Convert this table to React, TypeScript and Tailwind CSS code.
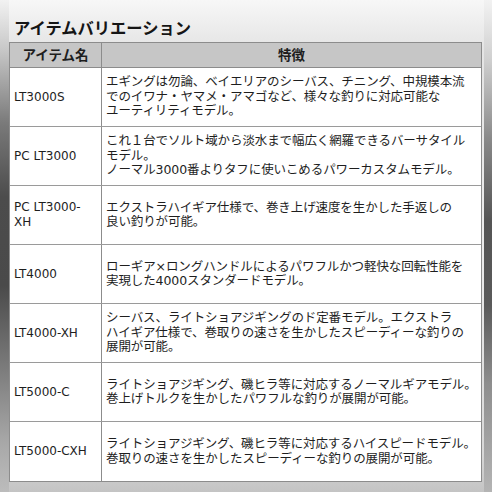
import { Fragment } from "react";

const FONT = { fontFamily: '"DejaVu Sans", "Noto Sans CJK JP", sans-serif' };

type Row = { name: string[]; desc: string[] };

const rows: Row[] = [
  {
    name: ["LT3000S"],
    desc: [
      "エギングは勿論、ベイエリアのシーバス、チニング、中規模本流",
      "でのイワナ・ヤマメ・アマゴなど、様々な釣りに対応可能な",
      "ユーティリティモデル。",
    ],
  },
  {
    name: ["PC LT3000"],
    desc: [
      "これ１台でソルト域から淡水まで幅広く網羅できるバーサタイル",
      "モデル。",
      "ノーマル3000番よりタフに使いこめるパワーカスタムモデル。",
    ],
  },
  {
    name: ["PC LT3000-", "XH"],
    desc: [
      "エクストラハイギア仕様で、巻き上げ速度を生かした手返しの",
      "良い釣りが可能。",
    ],
  },
  {
    name: ["LT4000"],
    desc: [
      "ローギア×ロングハンドルによるパワフルかつ軽快な回転性能を",
      "実現した4000スタンダードモデル。",
    ],
  },
  {
    name: ["LT4000-XH"],
    desc: [
      "シーバス、ライトショアジギングのド定番モデル。エクストラ",
      "ハイギア仕様で、巻取りの速さを生かしたスピーディーな釣りの",
      "展開が可能。",
    ],
  },
  {
    name: ["LT5000-C"],
    desc: [
      "ライトショアジギング、磯ヒラ等に対応するノーマルギアモデル。",
      "巻上げトルクを生かしたパワフルな釣りが展開が可能。",
    ],
  },
  {
    name: ["LT5000-CXH"],
    desc: [
      "ライトショアジギング、磯ヒラ等に対応するハイスピードモデル。",
      "巻取りの速さを生かしたスピーディーな釣りの展開が可能。",
    ],
  },
];

function Lines({ lines }: { lines: string[] }) {
  return (
    <p className="whitespace-nowrap">
      {lines.map((l, i) => (
        <Fragment key={i}>
          {i > 0 && <br />}
          {l}
        </Fragment>
      ))}
    </p>
  );
}

export default function App() {
  return (
    <div
      className="flex h-[492px] w-[492px] overflow-hidden bg-[linear-gradient(to_bottom,#f7f7f7_0%,#e4e4e4_10%,#ececec_50%,#d8d8d8_92%,#c4c4c4_100%)] text-[#1e1e1e]"
      style={FONT}
    >
      <div className="w-[9px] shrink-0 bg-[linear-gradient(to_bottom,#f2f2f2_0%,#c8c8c8_10%,#7a7a7a_25%,#4c4c4c_40%,#4a4a4a_58%,#7c7c7c_75%,#a8a8a8_90%,#bcbcbc_100%)]" />
      <div className="flex w-[473px] flex-col">
        <h1 className="pl-[5px] pt-[18px] text-[16.3px] font-bold leading-[21px] text-[#151515]">
          アイテムバリエーション
        </h1>
        <div className="mt-[3px] border border-[#8c8c8c] bg-white">
          <div className="flex h-[25px] border-b border-[#8c8c8c] bg-[#c6c6c6] text-[13.5px] font-bold">
            <div className="flex w-[92px] items-center justify-center border-r border-[#8c8c8c]">
              アイテム名
            </div>
            <div className="flex flex-1 items-center justify-center">特徴</div>
          </div>
          {rows.map((r, i) => (
            <div
              key={i}
              className={`flex h-[59px] text-[12.5px] leading-[14.5px] ${
                i < rows.length - 1 ? "border-b border-[#9a9a9a]" : ""
              }`}
            >
              <div className="flex w-[92px] flex-col justify-center border-r border-[#8c8c8c] pl-[4px] text-[12px] leading-[15px]">
                <Lines lines={r.name} />
              </div>
              <div className="flex flex-1 flex-col justify-center pl-[4px] tracking-[-0.1px]">
                <Lines lines={r.desc} />
              </div>
            </div>
          ))}
        </div>
      </div>
      <div className="w-[2px] shrink-0" />
      <div className="w-[8px] shrink-0 bg-[linear-gradient(to_bottom,#f2f2f2_0%,#d0d0d0_12%,#8a8a8a_28%,#555555_45%,#5a5a5a_62%,#8e8e8e_78%,#b4b4b4_100%)]" />
    </div>
  );
}
